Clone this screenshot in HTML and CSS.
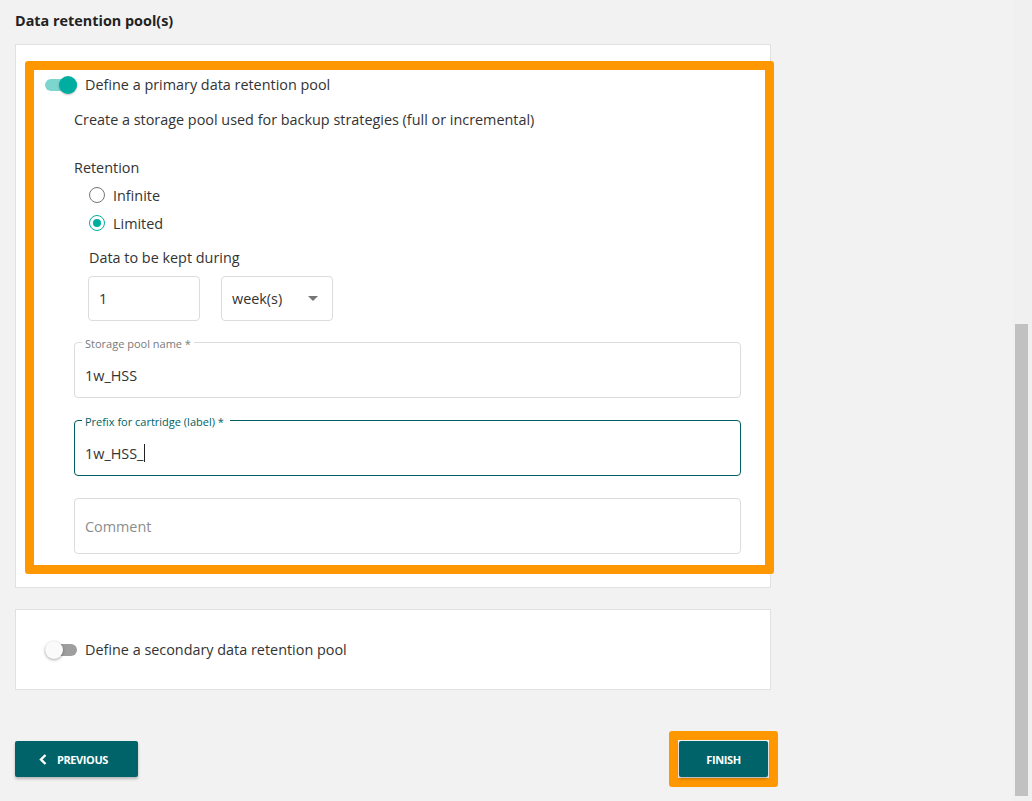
FILE: index.html
```html
<!DOCTYPE html>
<html lang="en">
<head>
<meta charset="utf-8">
<title>Data retention pool(s)</title>
<link rel="stylesheet" href="styles.css">
</head>
<body>
<div class="page">
  <main class="main">
    <h2 class="title">Data retention pool(s)</h2>

    <section class="card card-primary">
      <div class="highlight">
        <div class="toggle-row">
          <span class="toggle on"><span class="knob"></span></span>
          <span class="toggle-label">Define a primary data retention pool</span>
        </div>
        <div class="content">
          <p class="desc">Create a storage pool used for backup strategies (full or incremental)</p>
          <p class="group-label">Retention</p>
          <div class="radios">
            <div class="radio-row"><span class="radio"></span><span>Infinite</span></div>
            <div class="radio-row"><span class="radio checked"><span class="dot"></span></span><span>Limited</span></div>
          </div>
          <p class="kept-label">Data to be kept during</p>
          <div class="kept-row">
            <div class="box">1</div>
            <div class="box select"><span>week(s)</span>
              <svg class="caret" width="10" height="5" viewBox="0 0 10 5"><path d="M0 0 L10 0 L5 5 Z" fill="#757575"/></svg>
            </div>
          </div>
          <div class="field">
            <span class="float-label">Storage pool name *</span>
            <span class="value">1w_HSS</span>
          </div>
          <div class="field focused">
            <span class="float-label">Prefix for cartridge (label) *</span>
            <span class="value">1w_HSS_<span class="caret-line"></span></span>
          </div>
          <div class="field plain">
            <span class="placeholder">Comment</span>
          </div>
        </div>
      </div>
    </section>

    <section class="card card-secondary">
      <span class="toggle off"><span class="knob"></span></span>
      <span class="toggle-label">Define a secondary data retention pool</span>
    </section>

    <div class="actions">
      <button class="btn prev">
        <svg width="8" height="11" viewBox="0 0 8 11"><path d="M6.5 1 L2 5.5 L6.5 10" fill="none" stroke="#fff" stroke-width="2.4"/></svg>
        <span>PREVIOUS</span>
      </button>
      <div class="finish-wrap">
        <button class="btn finish">FINISH</button>
      </div>
    </div>
  </main>
  <div class="scrollbar"><div class="thumb"></div></div>
</div>
</body>
</html>
```

FILE: styles.css
```css
html, body {
  margin: 0;
  padding: 0;
  height: 100%;
}
body {
  background: #f2f2f2;
  font-family: "Open Sans", "Liberation Sans", sans-serif;
  color: #333;
  overflow: hidden;
}
.page {
  display: flex;
  height: 801px;
}
.main {
  width: 756px;
  padding: 0 0 0 15px;
  flex: none;
}
.title {
  margin: 0;
  padding-top: 12px;
  font-size: 14.4px;
  line-height: 18px;
  font-weight: 700;
  color: #222;
}
.card {
  background: #fff;
  border: 1px solid #e1e1e1;
  box-sizing: border-box;
}
.card-primary {
  margin-top: 14px;
  padding: 16px 0 13px 0;
}
.highlight {
  border: 9px solid #ff9800;
  border-radius: 3px;
  margin: 0 -4px 0 9px;
  padding: 0 0 11px 0;
  background: #fff;
}
.toggle-row {
  display: flex;
  align-items: center;
  height: 30px;
  padding-left: 11px;
}
.toggle {
  width: 32px;
  height: 12px;
  border-radius: 6px;
  display: flex;
  align-items: center;
  flex: none;
}
.toggle.on {
  background: #7dd5cf;
  justify-content: flex-end;
}
.toggle.off {
  background: #9e9e9e;
  justify-content: flex-start;
}
.knob {
  width: 18px;
  height: 18px;
  border-radius: 50%;
  flex: none;
}
.toggle.on .knob {
  background: #00ada1;
  box-shadow: 0 1px 2px rgba(0,0,0,0.25);
}
.toggle.off .knob {
  background: #fafafa;
  box-shadow: 0 1px 3px rgba(0,0,0,0.35);
}
.toggle-label {
  margin-left: 8px;
  font-size: 14.4px;
  line-height: 20px;
}
.content {
  padding: 0 24px 0 40px;
}
.content p {
  margin: 0;
  font-size: 14.4px;
  line-height: 20px;
}
.desc {
  padding-top: 10px;
}
.content .group-label {
  padding-top: 28px;
}
.radios {
  padding-left: 15px;
  padding-top: 3px;
}
.radio-row {
  display: flex;
  align-items: center;
  height: 28px;
  font-size: 14.4px;
}
.radio {
  width: 16px;
  height: 16px;
  box-sizing: border-box;
  border: 1.5px solid #757575;
  border-radius: 50%;
  margin-right: 8px;
  display: flex;
  align-items: center;
  justify-content: center;
}
.radio.checked {
  border-color: #00ada1;
}
.dot {
  width: 8px;
  height: 8px;
  border-radius: 50%;
  background: #00ada1;
}
.content .kept-label {
  padding-left: 15px;
  padding-top: 11px;
}
.kept-row {
  display: flex;
  gap: 21px;
  padding-left: 14px;
  padding-top: 8px;
}
.box {
  width: 112px;
  height: 45px;
  box-sizing: border-box;
  border: 1px solid #dcdcdc;
  border-radius: 4px;
  display: flex;
  align-items: center;
  padding: 0 10px;
  font-size: 14.4px;
}
.select {
  justify-content: space-between;
  padding-right: 14px;
}
.field {
  position: relative;
  margin-top: 21px;
  height: 56px;
  box-sizing: border-box;
  border: 1px solid #dcdcdc;
  border-radius: 4px;
  display: flex;
  align-items: center;
  padding: 10px 10px 0 10px;
  font-size: 14.4px;
}
.field + .field {
  margin-top: 22px;
}
.field.focused {
  border-color: #005f63;
}
.field.plain {
  padding-top: 0;
}
.float-label {
  position: absolute;
  top: -5px;
  left: 7px;
  padding: 0 3px;
  background: #fff;
  font-size: 11px;
  line-height: 12px;
  color: #7a7a7a;
}
.field.focused .float-label {
  color: #005f63;
  padding-right: 6px;
}
.value {
  color: #333;
  display: inline-flex;
  align-items: center;
}
.caret-line {
  display: inline-block;
  width: 1px;
  height: 18px;
  background: #222;
  margin-left: 1px;
}
.placeholder {
  color: #8c8c8c;
}
.card-secondary {
  margin-top: 21px;
  height: 81px;
  display: flex;
  align-items: center;
  padding-left: 29px;
  padding-top: 1px;
}
.actions {
  display: flex;
  justify-content: space-between;
  align-items: center;
  margin-top: 41px;
  margin-right: -7px;
}
.btn {
  border: 0;
  border-radius: 2px;
  background: #00636a;
  color: #fff;
  font-family: "Open Sans", "Liberation Sans", sans-serif;
  font-size: 11px;
  font-weight: 700;
  letter-spacing: -0.4px;
  height: 36px;
  box-shadow: 0 2px 3px rgba(0,0,0,0.25);
  display: flex;
  align-items: center;
  justify-content: center;
  cursor: pointer;
}
.prev {
  width: 123px;
  padding: 0 6px 0 0;
  gap: 10px;
}
.finish-wrap {
  border: 9px solid #ff9800;
  border-radius: 3px;
  padding: 1px;
  background: #f4f4f4;
}
.finish {
  width: 89px;
}
.scrollbar {
  margin-left: 242px;
  width: 19px;
  background: #f0f0f0;
  flex: none;
  padding-left: 2px;
  box-sizing: border-box;
}
.thumb {
  margin-top: 324px;
  width: 13px;
  height: 472px;
  background: #c1c1c1;
}
```
